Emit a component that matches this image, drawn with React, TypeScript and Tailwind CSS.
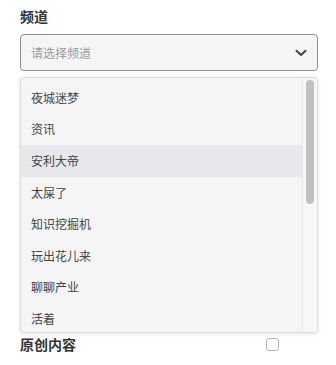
import React from "react";

const items = ["夜城迷梦", "资讯", "安利大帝", "太屎了", "知识挖掘机", "玩出花儿来", "聊聊产业", "活着"];

export default function App() {
  return (
    <div
      className="w-[336px] h-[365px] bg-white overflow-hidden px-[20px] pt-[8px]"
      style={{ fontFamily: '"Noto Sans CJK SC", "Noto Sans", sans-serif' }}
    >
      <div className="text-[14px] leading-[16px] font-bold text-[#333]">频道</div>
      <div className="mt-[10px] h-[37px] w-[298px] rounded-[4px] border border-[#8f8f8f] bg-[#f5f5f5] flex items-center justify-between pl-[10px] pr-[10px]">
        <span className="text-[12px] text-[#9a9a9a]">请选择频道</span>
        <svg width="12" height="8" viewBox="0 0 12 8" fill="none">
          <path d="M1.5 1.8L6 6L10.5 1.8" stroke="#444" strokeWidth="2" strokeLinecap="round" strokeLinejoin="round" />
        </svg>
      </div>
      <div className="mt-[6px] h-[256px] w-[298px] rounded-[4px] border border-[#dcdcdc] bg-[#f5f5f5] shadow-[0_1px_4px_rgba(0,0,0,0.12)] flex overflow-hidden">
        <div className="flex-1 pt-[4px] overflow-hidden">
          {items.map((it, i) => (
            <div
              key={it}
              className={
                "h-[31.6px] flex items-center pl-[10px] text-[12px] text-[#444] " +
                (i === 2 ? "bg-[#e7e8eb]" : "")
              }
            >
              {it}
            </div>
          ))}
        </div>
        <div className="w-[15px] border-l border-[#e6e6e6] bg-[#f7f7f7] pt-[2px] flex justify-center">
          <div className="w-[8px] h-[124px] rounded-full bg-[#c1c1c1]" />
        </div>
      </div>
      <div className="mt-[3px] flex items-center justify-between">
        <span className="text-[14px] leading-[16px] font-bold text-[#333]">原创内容</span>
        <div className="mr-[37px] w-[13px] h-[13px] rounded-[3px] border border-[#b5b5b5] bg-white" />
      </div>
    </div>
  );
}
